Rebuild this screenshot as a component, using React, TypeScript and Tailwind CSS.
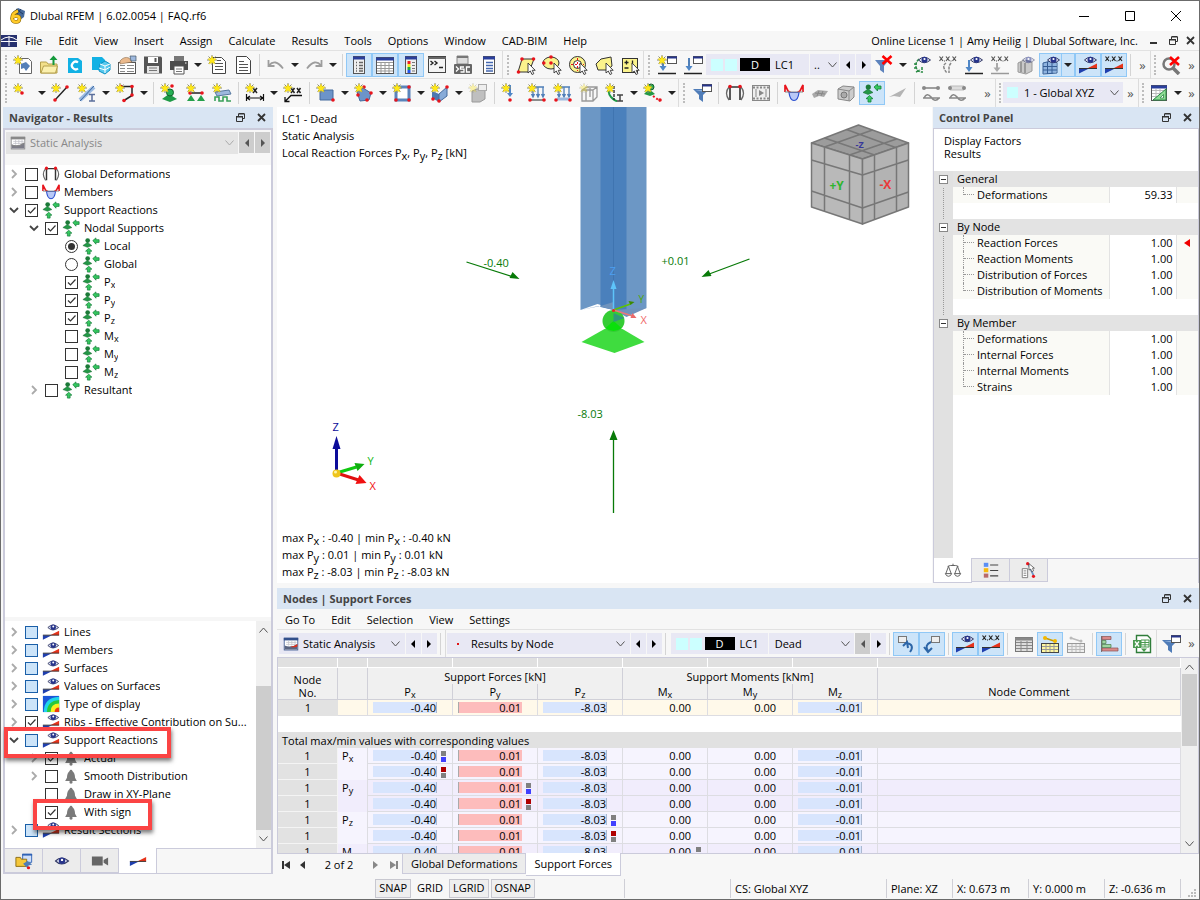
import React from 'react';
import { clsx } from 'clsx';

/* ---------- Icon pieces ---------- */

const Star = () => (
  <g>
    <path d="M5 0v10M0 5h10M1.5 1.5l7 7M8.5 1.5l-7 7" stroke="#8a8a70" />
    <path d="M5 1l1.2 2.6L9 3.8 7 6l.8 3L5 7.6 2.2 9 3 6 1 3.8l2.8-.2z" fill="#ffe81a" stroke="#e0c400" strokeWidth=".4" />
  </g>
);

const Eye = () => (
  <g>
    <path d="M6.500 5Q12 -.5 18.500 5 12 10.500 6.500 5z" fill="#dfe3f4" stroke="#333a66" />
    <circle cx="12.500" cy="4.800" r="3" fill="#27348b" />
    <circle cx="12.500" cy="4" r="1.100" fill="#fff" />
  </g>
);

const Wedge = () => (
  <g>
    <path d="M1 13.500h10L1 18.500z" fill="#1f3fae" />
    <path d="M9 13.500l10-5v5z" fill="#e6331a" />
    <path d="M1 13.500h18" stroke="#333" />
  </g>
);

const MiniWindow = () => (
  <g>
    <rect x="10.500" y="1.500" width="9" height="7" fill="#fff" stroke="#555" />
    <path d="M10 2.500h10" stroke="#27348b" strokeWidth="2" />
  </g>
);

const Cursor = () => (
  <path d="M12 8v10l2.300-2 1.700 3.500 1.800-.8-1.600-3.400h3z" fill="#fff" stroke="#333" strokeWidth=".9" />
);

const XXX = () => (
  <path d="M1.500 1.500l3.500 4.500M5 1.500L1.500 6M8 1.500L11.500 6M11.500 1.500L8 6M14.500 1.500L18 6M18 1.500L14.500 6M6 6h1M12.500 6h1" stroke="currentColor" strokeWidth="1.200" />
);

const Node = ({ x, y }: { x: number; y: number }) => <circle cx={x} cy={y} r="1.800" fill="#e8141c" />;

const icons: Record<string, React.ReactNode> = {
  newModel: <><path d="M6.500 3.500h9l3 3v12h-12z" fill="#fff" stroke="#666" /><path d="M8 9l5-2 4 4-4 5-2-3-3 1z" fill="#5580b8" /><Star /></>,
  open: <><path d="M1.500 7h6l1.500 2h9v9h-16.500z" fill="#f3e08a" stroke="#b5a04c" /><path d="M2 18l2.500-7h14l-2 7z" fill="#fbf0ae" stroke="#b5a04c" /><path d="M13.500 10V5h-3l4-4.500 4 4.500h-3v5z" fill="#149a3c" /></>,
  cloud: <><path d="M3 3h10l4 3v12H3z" fill="#12b1e4" /><path d="M13 7.500a3.800 3.800 0 1 0 0 6" fill="none" stroke="#fff" strokeWidth="2.200" /></>,
  cloudCube: <><path d="M1 2h10l3 3v10H1z" fill="#12b1e4" /><path d="M9 9l5-3 5 3v6l-5 4-6-3z" fill="#58c9ee" stroke="#0e92c4" /><path d="M9 9l5 2 5-2M14 11v7M8 13l6 2 5-3" fill="none" stroke="#fff" /></>,
  blocks: <><rect x="1.500" y="7.500" width="17" height="11" fill="#fff" stroke="#555" /><path d="M3 10.500h5M3 13.500h5M3 16.500h5M10 10.500h7M10 13.500h7M10 16.500h7" stroke="#888" /><path d="M3 6q4-5 9-3l3 4-6 1-6 1z" fill="#eab98c" stroke="#8a6a4a" strokeWidth=".6" /><path d="M13 1h6v5h-5z" fill="#9db8de" stroke="#456" strokeWidth=".7" /></>,
  save: <><path d="M1 1.500h17l1 1v16H1z" fill="#555" /><path d="M5 2h10v6H5z" fill="#fff" /><path d="M4 11h12v7H4z" fill="#e6e6e6" /><path d="M12.500 3v4" stroke="#555" strokeWidth="2" /><path d="M6 13h8M6 15.500h8" stroke="#777" /></>,
  print: <><path d="M5 1h10v5H5z" fill="#777" /><path d="M1 6h18v9H1z" fill="#4d4d4d" /><path d="M5 11h10v8H5z" fill="#fff" stroke="#555" /><path d="M7 14h6M7 16.500h6" stroke="#777" /><path d="M16 8h1.500" stroke="#fff" /></>,
  newReport: <><path d="M5.500 2.500h9l4 4v12h-13z" fill="#fff" stroke="#444" /><path d="M8 8.500h8M8 11.500h8M8 14.500h8M10 5.500h4" stroke="#555" strokeWidth="1.200" /><Star /></>,
  report: <><path d="M3.500 1.500h10l4 4v13h-14z" fill="#fff" stroke="#444" /><path d="M6 6.500h5M6 9.500h9M6 12.500h9M6 15.500h9" stroke="#555" strokeWidth="1.200" /></>,
  undo: <path d="M2.500 5v6h6M3 10.500Q9 3 17 13.500" fill="none" stroke="#9d9d9d" strokeWidth="1.800" />,
  redo: <path d="M17.500 5v6h-6M17 10.500Q11 3 3 13.500" fill="none" stroke="#9d9d9d" strokeWidth="1.800" />,
  navigator: <><rect x="4.500" y="1.500" width="11" height="17" fill="#efefef" stroke="#555" /><path d="M4 3h12" stroke="#2a3f9c" strokeWidth="3" /><path d="M7 7.500h1M7 10.500h1M7 13.500h1M7 16h1M10 7.500h4M10 10.500h4M10 13.500h4M10 16h4" stroke="#666" strokeWidth="1.500" /></>,
  tables: <><rect x="1.500" y="2.500" width="17" height="16" fill="#fff" stroke="#555" /><path d="M1 4h18" stroke="#2a3f9c" strokeWidth="3" /><path d="M2 7.500h16M2 10.500h16M2 13.500h16M2 16h16M6 7v11M10 7v11M14 7v11" stroke="#999" /></>,
  panel: <><rect x="4.500" y="1.500" width="11" height="17" fill="#efefef" stroke="#555" /><path d="M4 3h12" stroke="#2a3f9c" strokeWidth="3" /><path d="M8 6v3" stroke="#e22" strokeWidth="3" /><path d="M8 9v3" stroke="#ee2" strokeWidth="3" /><path d="M8 12v3" stroke="#2a4" strokeWidth="3" /><path d="M8 15v3" stroke="#25e" strokeWidth="3" /><path d="M11 7.500h3M11 10.500h3M11 13.500h3M11 16h3" stroke="#777" /></>,
  console: <><rect x="1.500" y="1.500" width="17" height="16" fill="#f4f4f4" stroke="#444" /><path d="M1 3h18" stroke="#666" strokeWidth="2" /><path d="M3.500 6l2.500 2-2.500 2M7.500 6l2.500 2-2.500 2M12 12.500h4" fill="none" stroke="#222" strokeWidth="1.400" /></>,
  script: <><path d="M4 1h11v8H4z" fill="#ddd" stroke="#888" /><path d="M4 2h11" stroke="#777" strokeWidth="2" /><rect x="1" y="9" width="18" height="10" rx="1" fill="#666" /><path d="M3 11.500l2.500 2.500L3 16.500M11 12H7.500v2.200H11V17H7.500M17 12h-3.500v5H17" fill="none" stroke="#fff" strokeWidth="1.300" /></>,
  sheet: <><rect x="4.500" y="1.500" width="11" height="17" fill="#fff" stroke="#555" /><path d="M4 3h12" stroke="#2a3f9c" strokeWidth="3" /><path d="M7 7.500h7M7 10.500h7M7 13.500h7M7 16h7" stroke="#4568b0" strokeWidth="1.500" /></>,
  selectBox: <><path d="M6 4h12l-5 13H2z" fill="#fbf38c" stroke="#333" /><Node x={6} y={4} /><Node x={17.500} y={4} /><Node x={2.500} y={17} /><Cursor /></>,
  selectEllipse: <><ellipse cx="9" cy="8" rx="8" ry="6" fill="#fbf38c" stroke="#333" /><Node x={1.800} y={8} /><Node x={9} y={8} /><Node x={9} y={2} /><Cursor /></>,
  selectRing: <><circle cx="9.500" cy="9.500" r="8" fill="#fbf38c" stroke="#333" /><circle cx="9.500" cy="9.500" r="4" fill="#fff" stroke="#333" /><path d="M9.500 3v13M3 9.500h13" stroke="#e8141c" strokeDasharray="2 2" /><Cursor /></>,
  selectPoly: <><path d="M2 9l5-5 10-2 1 9-5 4H4z" fill="#fbf38c" stroke="#333" /><Cursor /></>,
  selectPlus: <><rect x="2.500" y="3.500" width="15" height="14" fill="#fbf38c" stroke="#333" /><path d="M4.500 7.500h4M6.500 5.500v4M4.500 13h4M12.500 5.500v4" stroke="#222" strokeWidth="1.300" /><Cursor /></>,
  newLoad: <><path d="M6 5v7" stroke="#4f7fb8" strokeWidth="2" /><path d="M2.500 11l3.500 5 3.500-5z" fill="#4f86c6" /><path d="M1 18.500h18" stroke="#222" strokeWidth="1.500" /><MiniWindow /><Star /></>,
  load: <><path d="M6 3v9" stroke="#4f7fb8" strokeWidth="2" /><path d="M2.500 11l3.500 5 3.500-5z" fill="#4f86c6" /><path d="M1 18.500h18" stroke="#222" strokeWidth="1.500" /><MiniWindow /></>,
  filterX: <><path d="M1 5h14l-5 6v7l-4-3v-4z" fill="#5d83bd" /><path d="M8.500 1l9 8M17.500 1l-9 8" stroke="#f00" strokeWidth="2.600" /></>,
  springEye: <><path d="M7 4Q3 8 4 12t5 5M2 9h4M2 13h4M4 17l4-2M10 12v6" fill="none" stroke="#2a8a45" strokeWidth="1.500" strokeDasharray="3 1" /><Eye /></>,
  springX: <g color="#555"><XXX /><path d="M8 8q-3 2-2 5t3 5M13 8l-2 3v7" fill="none" stroke="#888" strokeWidth="1.500" strokeDasharray="3 1" /></g>,
  loadEye: <><path d="M5 5v9" stroke="#4f86c6" strokeWidth="2" /><path d="M1.500 12L5 17l3.500-5z" fill="#4f86c6" /><path d="M1 18.500h18" stroke="#222" strokeWidth="1.500" /><Eye /></>,
  loadX: <g color="#555"><XXX /><path d="M7 8v6" stroke="#aaa" strokeWidth="2" /><path d="M3.500 12.500L7 17l3.500-4.500z" fill="#aaa" /><path d="M1 18.500h18" stroke="#999" strokeWidth="1.500" /></g>,
  boxEye: <><path d="M2 8l6-3 8 2v9l-6 3-8-2z" fill="#c9c9c9" stroke="#999" /><path d="M5 7v10M9 8v10" stroke="#999" strokeWidth="2" /><g opacity=".5"><Eye /></g></>,
  gridEye: <><path d="M2 8l6-2 7 1v10l-6 2-7-1z" fill="#8fb4e0" /><path d="M2 8l6-1.500 8 1V18l-14 1zM2 11.500h14M2 15h14M6.500 7v12M11 7v12" fill="none" stroke="#345c93" /><Eye /></>,
  wedgeEye: <><Wedge /><Eye /></>,
  wedgeX: <g color="#222"><XXX /><Wedge /></g>,
  wedge: <g transform="translate(0 -3)"><Wedge /></g>,
  searchX: <><circle cx="8" cy="9" r="5.500" fill="none" stroke="#777" strokeWidth="2.500" /><path d="M12 13l6 6" stroke="#777" strokeWidth="3.500" /><path d="M9 2l9 8M18 2l-9 8" stroke="#f00" strokeWidth="2.600" /></>,
  nodeNew: <><Star /><Node x={9} y={10} /></>,
  lineNew: <><path d="M4 17L16 4" stroke="#222" strokeWidth="1.400" /><Node x={4} y={17} /><Node x={16} y={4} /><Star /></>,
  memberNew: <><path d="M3 17L17 4" stroke="#9bbae2" strokeWidth="4" /><path d="M3 18L17 3" stroke="#3e689e" /><path d="M12 11.500h6M12 18h6M15 11v7" stroke="#5b6f9c" strokeWidth="1.500" /><Star /></>,
  polyNew: <><path d="M6 3.500h11v9l-8 5" fill="none" stroke="#222" strokeWidth="1.500" /><Node x={6} y={3.500} /><Node x={17} y={3.500} /><Node x={17} y={12} /><Node x={9} y={17.500} /><Star /></>,
  supportNew: <><path d="M2 16l7-5 8 5-7 3z" fill="#1f9a46" /><circle cx="10" cy="9.500" r="3.500" fill="#25b053" stroke="#14632d" /><Node x={12} y={3} /><Star /></>,
  lineSupport: <><path d="M3 10h14" stroke="#222" strokeWidth="1.500" /><path d="M1 18l4-6 4 6zM11 18l4-6 4 6z" fill="#25a04b" /><Node x={4} y={10} /><Node x={16} y={10} /><Star /></>,
  surfSupport: <><path d="M3 9l14-2 2 4-14 2z" fill="#9db8de" stroke="#56789f" /><path d="M3 18v-4h4v4h4v-4h4v4h4" fill="none" stroke="#3aa05a" strokeWidth="1.600" /><Star /></>,
  dimX: <><path d="M1.500 11v7M18.500 11v7M2 15h16M5 13l-3 2 3 2M15 13l3 2-3 2" fill="none" stroke="#111" strokeWidth="1.200" /><path d="M8 5l4 5M12 5l-4 5" stroke="#222" strokeWidth="1.500" /><Star /></>,
  dimXX: <><path d="M19 12.500H8l-6 6M2 14v4.500h4.500" fill="none" stroke="#111" strokeWidth="1.300" /><path d="M8 5l3.500 5M11.500 5L8 10M14 5l3.500 5M17.500 5L14 10" stroke="#222" strokeWidth="1.500" /><Star /></>,
  surfaceNew: <><path d="M4 7h13v10H4z" fill="#6c94c9" stroke="#456b9d" /><Node x={17} y={17} /><Star /></>,
  solidNew: <><path d="M3 9l6-4 8 5-2 7-9 1z" fill="#6c94c9" stroke="#456b9d" /><Node x={10} y={4} /><Node x={17} y={10} /><Node x={4} y={12} /><Node x={13} y={17} /><Star /></>,
  openingNew: <><path d="M4 4h13v13H4z" fill="#fff" stroke="#5a84bb" strokeWidth="3" /><Node x={17} y={4} /><Node x={4} y={17} /><Node x={17} y={17} /><Star /></>,
  brickNew: <><path d="M2 8l7 3v8l-7-4z" fill="#4c78b0" /><path d="M9 11l8-7v9l-8 6z" fill="#87abd8" stroke="#456b9d" /><Node x={17} y={4} /><Node x={3} y={16} /><Node x={9} y={18} /><Star /></>,
  boxGray: <><path d="M4 8l5-2h8v10l-5 3H4z" fill="#bfbfbf" stroke="#999" /><rect x="10.500" y="1.500" width="8" height="6" fill="#eee" stroke="#aaa" /><g opacity=".35"><Star /></g></>,
  nodalLoad: <><path d="M9 2v10" stroke="#4f86c6" strokeWidth="2" /><path d="M6 10l3 4 3-4z" fill="#4f86c6" /><Node x={9} y={17} /><Star /></>,
  memberLoad: <><path d="M5 4h12M6 4v9M11 4v9M16 4v9M4.500 11L6 14l1.500-3M9.500 11l1.500 3 1.500-3M14.500 11l1.500 3 1.500-3" fill="none" stroke="#4f7fb8" strokeWidth="1.300" /><path d="M3 17h14" stroke="#222" /><Node x={3} y={17} /><Node x={17} y={17} /><Star /></>,
  surfaceLoad: <><path d="M5 4h12M6 4v9M11 4v9M16 4v9M4.500 11L6 14l1.500-3M9.500 11l1.500 3 1.500-3M14.500 11l1.500 3 1.500-3" fill="none" stroke="#4f7fb8" strokeWidth="1.300" /><path d="M4 14.500h13v3H4z" fill="#9db8de" /><Node x={3} y={17} /><Node x={17} y={17} /><Star /></>,
  solidLoad: <><path d="M3 7l5-3h10v10l-4 4H3zM3 7h11v11M14 7l4-3M7 7v11M11 5v9" fill="none" stroke="#999" strokeWidth="1.300" /><g opacity=".35"><Star /></g></>,
  imperfection: <><path d="M5 3Q2 10 6 14t6 4" fill="none" stroke="#1f9a46" strokeWidth="2" /><path d="M9 3v14" stroke="#222" strokeWidth="1.300" strokeDasharray="3 1" /><path d="M12 12h6M12 18h6M15 12v6" stroke="#444" strokeWidth="1.500" /><Star /></>,
  resultNew: <><path d="M1 11l5-5 6 5-5 2z" fill="#239746" /><circle cx="8" cy="4" r="3" fill="#25b053" stroke="#14632d" /><path d="M10 13l7 5" stroke="#e8141c" strokeWidth="2" strokeDasharray="2 2" /><Node x={17} y={17} /><Star /></>,
  filterWin: <><path d="M1 6h16l-6 6v7l-4-3v-4z" fill="#4f7cb8" /><path d="M3 7h12l-2 2z" fill="#8fb0dc" /><MiniWindow /></>,
  deform: <><path d="M5 17V4h10v13" fill="none" stroke="#333" strokeWidth="1.600" /><path d="M4 17Q-1 10 4 4M16 17q5-7 0-13" fill="none" stroke="#666" strokeWidth="1.300" /><Node x={5} y={3.500} /><Node x={15} y={3.500} /></>,
  film: <><rect x="1.500" y="2.500" width="17" height="15" fill="#eee" stroke="#888" /><path d="M2 4.500h16M2 15.500h16" stroke="#888" strokeWidth="2" strokeDasharray="2 1.500" /><path d="M8 7l5 3-5 3z" fill="#888" /><path d="M5 6v8M15 6v8" stroke="#888" /></>,
  moment: <><path d="M1 9V2l3 6 3 2M19 9V2l-3 6-3 2" fill="none" stroke="#e8141c" strokeWidth="1.700" /><path d="M5 9.500h10q-1 8-5 8t-5-8z" fill="#b9c9f7" stroke="#2c50d0" strokeWidth="1.200" /><path d="M1 9h18" stroke="#888" /></>,
  surfRes: <><path d="M2 11l6-4 10 1-4 6-5-1-5 2z" fill="#aaa" /><path d="M5 10l10 1M9 8l-2 5M13 8l-2 5" stroke="#888" /></>,
  solidRes: <><path d="M2 6l5-3 11 1v10l-4 4L2 16z" fill="#ccc" stroke="#888" /><path d="M2 6l11 2v10M13 8l5-4" fill="none" stroke="#888" /><circle cx="8" cy="12" r="3" fill="#aaa" stroke="#777" /></>,
  reaction: <><path d="M1 9.500L6 6l5 3.500-5 2z" fill="#239746" stroke="#14632d" strokeWidth=".5" /><circle cx="6.300" cy="4" r="2.600" fill="#1c7a38" /><path d="M12 4l3.500-3v2H19v3h-3.500v2z" fill="#35c860" stroke="#15803a" strokeWidth=".8" /><path d="M7.500 12.500l3.500 3.200H9V19H6v-3.300H4z" fill="#35c860" stroke="#15803a" strokeWidth=".8" /></>,
  wing: <path d="M1 14L18 5l-6 9-6-1z" fill="#b4b4b4" />,
  beamA: <><path d="M3 5h14" stroke="#888" strokeWidth="1.600" /><circle cx="3" cy="5" r="2" fill="#888" /><circle cx="17" cy="5" r="2" fill="#888" /><path d="M2 15h17M3 15q3-6 7-1 4 6 8 1" fill="none" stroke="#888" strokeWidth="1.600" /></>,
  beamB: <><path d="M3 3h14v4H3z" fill="#ddd" stroke="#bbb" /><circle cx="3" cy="5" r="2" fill="#888" /><circle cx="17" cy="5" r="2" fill="#888" /><path d="M2 15h17M3 15q3-6 7-1 4 6 8 1" fill="none" stroke="#888" strokeWidth="1.600" /></>,
  planeTable: <><rect x="2.500" y="2.500" width="15" height="15" fill="#fff" stroke="#555" /><path d="M2 4h16" stroke="#2a3f9c" strokeWidth="3" /><path d="M3 7.500h14M3 10.500h14M3 13.500h14M7 6v11M11 6v11" stroke="#bbb" /><path d="M4 17L17 6v11z" fill="#8fdc95" stroke="#2a8a45" /><path d="M11 15l3.500-3.500V15z" fill="#fff" stroke="#2a8a45" strokeWidth=".8" /></>,
  analysis: <><rect x="1.500" y="2.500" width="17" height="15" fill="#fff" stroke="currentColor" /><path d="M1 4h18" stroke="currentColor" strokeWidth="3" /><path d="M4 8h13M4 10.500h13M7 6v6M11 6v6M15 6v6" stroke="#c4c4cc" /><path d="M2 12q8 3 16-2v7H2z" fill="#7d7d88" /><path d="M2 12.500q8 3 16-2.500" fill="none" stroke="currentColor" strokeWidth="1.500" /></>,
  analysisColor: <><rect x="1.500" y="2.500" width="17" height="15" fill="#fff" stroke="#33508c" /><path d="M1 4h18" stroke="#33508c" strokeWidth="3" /><path d="M4 8h13M4 10.500h13M7 6v6M11 6v6M15 6v6" stroke="#c4c4cc" /><path d="M2 12q8 3 16-2v7H2z" fill="#5a6480" /><path d="M9 13.500q5-.5 9-3.500v3q-4 2-9 .5z" fill="#e0301c" /></>,
  bell: <><path d="M10 3q1.500 0 1.500 1.500Q14.500 7 14.500 12l2 3.500h-13l2-3.500q0-5 3-7.500Q8.500 3 10 3z" fill="#7a7a7a" /><circle cx="10" cy="16.800" r="1.800" fill="#7a7a7a" /></>,
  rainbow: <><path d="M1 1h18v18H1z" fill="#1a55d8" /><path d="M2 19Q2 3 19 2v17z" fill="#1fd5e8" /><path d="M5.500 19Q5.500 6.500 19 5.500V19z" fill="#28c93c" /><path d="M9.500 19q0-9.500 9.500-9.500V19z" fill="#f8ef20" /><path d="M14 19q0-5 5-5v5z" fill="#ee3a10" /></>,
  tabData: <><path d="M8.500 2.500h10v9h-10z" fill="#cfe0fa" stroke="#2f62b5" /><path d="M8 3h11" stroke="#2f62b5" strokeWidth="2" /><path d="M1 6h5l1 2h6v8H1z" fill="#f5c73a" stroke="#8a6a10" /><path d="M9 13l5-3 5 4-4 1-1 3z" fill="#4f7cb8" /><Node x={15} y={17.500} /></>,
  tabEye: <g transform="translate(-5 4) scale(1.200)"><Eye /></g>,
  tabCamera: <path d="M1 5h12v10H1zM14 9l5-3v9l-5-3z" fill="#666" />,
  scales: <path d="M10 3v2M4 6l3-1h6l3 1M5 6l-3 8M5 6l3 8M15 6l-3 8M15 6l3 8M1.500 14h7q-1 3-3.500 3t-3.500-3zM11.500 14h7q-1 3-3.500 3t-3.500-3z" fill="none" stroke="#555" />,
  legend: <><path d="M2 2h5v4.500H2z" fill="#5b8ff5" /><path d="M2 8h5v4.500H2z" fill="#f7b90c" /><path d="M2 14h5v4.500H2z" fill="#b96a6a" /><path d="M9 4.500h9M9 10.500h9M9 16.500h9" stroke="#444" strokeWidth="1.200" /></>,
  probe: <><path d="M2.500 8.500h6v10h-6z" fill="#fff" stroke="#777" /><path d="M4 11h3M4 13.500h3M4 16h3" stroke="#777" /><path d="M9 3l6 13" stroke="#6e96c8" strokeWidth="2" /><Node x={8.500} y={3} /><Node x={15} y={17} /><path d="M10 3v7l2-1 1 3 2-1-1-3h2z" fill="#fff" stroke="#444" strokeWidth=".8" /></>,
  syncOut: <><rect x="2.500" y="2.500" width="8" height="6" fill="#eee" stroke="#777" /><path d="M7 12l4-4 1 6M11 9q8 2 3 9" fill="none" stroke="#2d66a8" strokeWidth="2" /></>,
  syncIn: <><rect x="9.500" y="2.500" width="8" height="6" fill="#eee" stroke="#777" /><path d="M9 8q-7 3-3 9M2 13l4 5 4-4" fill="none" stroke="#2d66a8" strokeWidth="2" /></>,
  grayTable: <><rect x="1.500" y="3.500" width="17" height="14" fill="#ddd" stroke="#777" /><path d="M1 5h18" stroke="#888" strokeWidth="3" /><path d="M2 8.500h16M2 11.500h16M2 14.500h16M7 7v10M13 7v10" stroke="#888" /></>,
  yellowTable: <><rect x="1.500" y="9.500" width="17" height="9" fill="#fdf6a0" stroke="#444" /><path d="M2 12.500h16M2 15.500h16M6 10v8M10 10v8M14 10v8" stroke="#999" /><path d="M5 4l9 3" stroke="#c89a00" strokeWidth="1.500" /><circle cx="5" cy="4" r="2" fill="#f5b800" /><circle cx="15" cy="7" r="2" fill="#f5b800" /></>,
  paleTable: <><rect x="1.500" y="9.500" width="17" height="9" fill="#eee" stroke="#999" /><path d="M2 12.500h16M2 15.500h16M6 10v8M10 10v8M14 10v8" stroke="#bbb" /><path d="M5 4l9 3" stroke="#bbb" strokeWidth="1.500" /><circle cx="5" cy="4" r="1.500" fill="#bbb" /><circle cx="15" cy="7" r="1.500" fill="#bbb" /></>,
  bars: <><path d="M2.500 2v16" stroke="#777" /><path d="M3 2.500h9v3H3zM3 14h16v3H3z" fill="#d98a8a" stroke="#8a5050" strokeWidth=".7" /><path d="M3 6.500h4v3H3zM3 10.500h9v3H3z" fill="#9fd6a0" stroke="#4a7a4a" strokeWidth=".7" /></>,
  excel: <><path d="M4.500 1.500h11l3 3v14h-14z" fill="#fff" stroke="#2f7d3a" strokeWidth="1.400" /><path d="M9 6h8v7H9zM9 8.500h8M9 10.800h8M13 6v7" fill="none" stroke="#4a9a50" /><path d="M1 6h8v8H1z" fill="#4a9a50" /><path d="M3 7.500l4 5M7 7.500l-4 5" stroke="#fff" strokeWidth="1.300" /><path d="M9 14.500h6l-3 3.500z" fill="#4a9a50" /></>,
};

const Icon: React.FC<{ name: string; className?: string }> = ({ name, className }) => (
  <svg viewBox="0 0 20 20" fill="none" className={clsx('shrink-0', className ?? 'w-5 h-5')} aria-hidden="true">
    {icons[name]}
  </svg>
);

/* ---------- Toolbar controls ---------- */

const ToolButton: React.FC<{ name: string; active?: boolean }> = ({ name, active }) => (
  <button
    aria-label={name}
    className={clsx(
      'flex h-6 w-[26px] shrink-0 items-center justify-center border',
      active ? 'border-[#90c8f6] bg-[#cce4f9]' : 'border-transparent'
    )}
  >
    <Icon name={name} />
  </button>
);

const Caret = () => (
  <button aria-label="More options" className="flex h-6 w-3 shrink-0 items-center justify-center">
    <svg viewBox="0 0 8 4" className="h-1 w-2"><path d="M0 0h8L4 4z" fill="#222" /></svg>
  </button>
);

const Divider = () => (
  <span className="flex h-[22px] w-[7px] shrink-0 justify-center"><span className="w-px bg-[#d4d4d4]" /></span>
);

const Grip: React.FC<{ variant?: 'first' | 'slim' }> = ({ variant }) => (
  <span
    className={clsx(
      'flex h-7 shrink-0 items-center justify-center',
      variant === 'first' ? 'w-[9px]' : 'border-l border-[#dcdcdc]',
      variant === 'slim' && 'w-2',
      !variant && 'w-[11px]'
    )}
  >
    <span className="h-5 border-l-2 border-dotted border-[#bdbdbd]" />
  </span>
);

const More = () => <button aria-label="More buttons" className="w-[15px] shrink-0 text-center text-[13px] leading-4 text-[#555]">»</button>;

const Arrow: React.FC<{ left?: boolean; gray?: boolean }> = ({ left, gray }) => (
  <button
    aria-label={left ? 'Previous' : 'Next'}
    className={clsx('ml-px flex h-[21px] w-[15px] shrink-0 items-center justify-center', gray ? 'bg-[#cdcdcd]' : 'bg-[#e8e8f4]')}
  >
    <svg viewBox="0 0 4 8" className="h-2 w-1">
      <path d={left ? 'M4 0v8L0 4z' : 'M0 0v8l4-4z'} fill={gray ? '#555' : '#000'} />
    </svg>
  </button>
);

const Chevron = ({ className }: { className?: string }) => (
  <svg viewBox="0 0 9 6" className={clsx('pointer-events-none h-1.5 w-[9px] shrink-0', className)} fill="none">
    <path d="M.5 .5l4 4.500 4-4.500" stroke="#555" />
  </svg>
);

const Select: React.FC<{ label: string; value: string; className?: string }> = ({ label, value, className }) => (
  <select aria-label={label} className={clsx('min-w-0 appearance-none bg-transparent outline-none', className)}>
    <option>{value}</option>
  </select>
);

const LoadSwatch = () => (
  <>
    <span className="ml-[5px] h-3 w-3 bg-[#ccffff]" />
    <span className="ml-0.5 h-3 w-3 bg-[#ccffff]" />
    <span className="ml-[3px] h-[13px] w-[30px] bg-black text-center text-[11px] leading-[13px] text-white">D</span>
  </>
);

/* '|' divider, '^' caret, ':' grip, '*' prefix marks a pressed button */
const Tools: React.FC<{ items: string }> = ({ items }) => (
  <>
    {items.split(' ').map((item, i) => {
      if (item === '|') return <Divider key={i} />;
      if (item === '^') return <Caret key={i} />;
      if (item === ':') return <Grip key={i} />;
      return <ToolButton key={i} name={item.replace('*', '')} active={item.startsWith('*')} />;
    })}
  </>
);

const WindowButtons: React.FC<{ tight?: boolean }> = ({ tight }) => (
  <>
    <button aria-label="Restore" className={tight ? 'mr-2' : 'mr-3'}>
      <svg viewBox="0 0 9 9" className="h-[9px] w-[9px]" fill="none" stroke="#333">
        <path d="M2.500 3V1h6v4.500H6.500M2.500 .5h6" /><path d="M.5 4h6v4.500h-6zM0 3.500h7" />
      </svg>
    </button>
    <button aria-label="Close">
      <svg viewBox="0 0 9 9" className="h-[9px] w-[9px]"><path d="M1 1l7 7M8 1L1 8" stroke="#333" strokeWidth="1.800" /></svg>
    </button>
  </>
);

const PanelTitle: React.FC<{ title: string }> = ({ title }) => (
  <div className="flex h-[21px] shrink-0 items-center bg-[#d9e5f3] pl-1.5 pr-[7px]">
    <h2 className="flex-1 font-bold text-[#444]">{title}</h2>
    <WindowButtons />
  </div>
);

const Sub: React.FC<{ text: string }> = ({ text }) => {
  const [base, sub] = text.split('_');
  return <>{base}{sub && <sub className="bottom-[-2px] text-[9px]">{sub}</sub>}</>;
};

/* ---------- Navigator ---------- */

interface TreeItem {
  label: string;
  level: number;
  icon: string;
  open?: boolean;
  leaf?: boolean;
  checked?: boolean;
  partial?: boolean;
  radio?: boolean;
  marked?: 'wide' | 'narrow';
}

const resultTree: TreeItem[] = [
  { label: 'Global Deformations', level: 0, icon: 'deform' },
  { label: 'Members', level: 0, icon: 'moment' },
  { label: 'Support Reactions', level: 0, icon: 'reaction', open: true, checked: true },
  { label: 'Nodal Supports', level: 1, icon: 'reaction', open: true, checked: true },
  { label: 'Local', level: 2, icon: 'reaction', leaf: true, radio: true, checked: true },
  { label: 'Global', level: 2, icon: 'reaction', leaf: true, radio: true },
  { label: 'P_x', level: 2, icon: 'reaction', leaf: true, checked: true },
  { label: 'P_y', level: 2, icon: 'reaction', leaf: true, checked: true },
  { label: 'P_z', level: 2, icon: 'reaction', leaf: true, checked: true },
  { label: 'M_x', level: 2, icon: 'reaction', leaf: true },
  { label: 'M_y', level: 2, icon: 'reaction', leaf: true },
  { label: 'M_z', level: 2, icon: 'reaction', leaf: true },
  { label: 'Resultant', level: 1, icon: 'reaction' },
];

const displayTree: TreeItem[] = [
  { label: 'Lines', level: 0, icon: 'wedgeEye', partial: true },
  { label: 'Members', level: 0, icon: 'wedgeEye', partial: true },
  { label: 'Surfaces', level: 0, icon: 'wedgeEye', partial: true },
  { label: 'Values on Surfaces', level: 0, icon: 'wedgeEye', partial: true },
  { label: 'Type of display', level: 0, icon: 'rainbow', partial: true },
  { label: 'Ribs - Effective Contribution on Su...', level: 0, icon: 'wedgeEye', checked: true },
  { label: 'Support Reactions', level: 0, icon: 'wedgeEye', partial: true, open: true, marked: 'wide' },
  { label: 'Actual', level: 1, icon: 'bell', checked: true },
  { label: 'Smooth Distribution', level: 1, icon: 'bell' },
  { label: 'Draw in XY-Plane', level: 1, icon: 'bell', leaf: true },
  { label: 'With sign', level: 1, icon: 'bell', leaf: true, checked: true, marked: 'narrow' },
  { label: 'Result Sections', level: 0, icon: 'wedgeEye', partial: true },
];

const indents = ['pl-0', 'pl-5', 'pl-10'];

const TreeRow: React.FC<{ item: TreeItem }> = ({ item }) => (
  <li className={clsx('relative flex h-[18px] items-center', indents[item.level])}>
    <span className="flex w-5 shrink-0 pl-1">
      {!item.leaf && (
        <svg viewBox="0 0 10 10" className="h-2.5 w-2.5" fill="none" strokeWidth="1.800">
          {item.open ? <path d="M1 3l4 4 4-4" stroke="#444" /> : <path d="M3 1l4 4-4 4" stroke="#aaa" />}
        </svg>
      )}
    </span>
    <label className="flex min-w-0 items-center">
      <span className="grid shrink-0">
        <input
          type={item.radio ? 'radio' : 'checkbox'}
          name={item.radio ? 'axes' : undefined}
          defaultChecked={item.checked}
          className={clsx(
            'peer h-[13px] w-[13px] appearance-none border [grid-area:1/1]',
            item.radio && 'rounded-full',
            item.partial ? 'border-[#1a5fa8] bg-[#cce4f9]' : 'border-[#333] bg-white'
          )}
        />
        <svg viewBox="0 0 13 13" fill="none" className="pointer-events-none hidden h-[13px] w-[13px] [grid-area:1/1] peer-checked:block">
          {item.radio ? <circle cx="6.500" cy="6.500" r="3.500" fill="#333" /> : <path d="M3 6.500l2.500 2.500 5-5.500" stroke="#333" strokeWidth="1.200" />}
        </svg>
      </span>
      <Icon name={item.icon} className="ml-1 h-[18px] w-[18px]" />
      <span className="ml-1 truncate leading-[18px]"><Sub text={item.label} /></span>
    </label>
    {item.marked && (
      <span
        className={clsx(
          'pointer-events-none absolute -top-1 z-10 h-[31px] border-4 border-[#fb4444] shadow-[1px_3px_4px_rgba(0,0,0,0.5)]',
          item.marked === 'wide' ? '-left-px w-[167px]' : 'left-7 w-[119px]'
        )}
      />
    )}
  </li>
);

const Navigator = () => (
  <aside className="mb-[3px] ml-0.5 flex w-[270px] shrink-0 flex-col">
    <PanelTitle title="Navigator - Results" />
    <div className="flex min-h-0 flex-1 flex-col border-2 border-b border-[#cbcbdb] bg-[#f7f7f7]">
      <div className="flex px-px pb-[11px] pt-0.5">
        <div className="flex h-[22px] min-w-0 flex-1 items-center bg-[#e4e4e4] pl-1 pr-1 text-[#888]">
          <Icon name="analysis" className="h-4 w-4" />
          <Select label="Analysis type" value="Static Analysis" className="ml-1 flex-1" />
          <Chevron className="opacity-40" />
        </div>
        <Arrow left gray />
        <Arrow gray />
      </div>
      <ul className="min-h-0 flex-1 overflow-hidden bg-white">
        {resultTree.map((item, i) => <TreeRow key={i} item={item} />)}
      </ul>
      <div className="flex shrink-0 border-t-4 border-[#f6f6f6] bg-white">
        <ul className="min-w-0 flex-1 pb-[9px] pt-0.5">
          {displayTree.map((item, i) => <TreeRow key={i} item={item} />)}
        </ul>
        <div className="flex w-[15px] shrink-0 flex-col items-center justify-between bg-[#f0f0f0] py-1.5">
          <Chevron className="rotate-180" />
          <span className="mt-auto mb-1.5 h-36 w-[15px] bg-[#cdcdcd]" />
          <Chevron />
        </div>
      </div>
      <div className="flex h-[25px] shrink-0 border-t border-[#cbcbdb]">
        {['tabData', 'tabEye', 'tabCamera', 'wedge'].map((name) => (
          <button
            key={name}
            aria-label={name}
            className={clsx('flex w-[38px] items-center justify-center border-r border-[#cbcbdb]', name === 'wedge' ? '-mt-px bg-white' : 'border-b bg-[#ececec]')}
          >
            <Icon name={name} className="h-[18px] w-[18px]" />
          </button>
        ))}
      </div>
    </div>
  </aside>
);

/* ---------- Model view ---------- */

const Low: React.FC<{ children: React.ReactNode }> = ({ children }) => <sub className="bottom-[-3px] text-[11px]">{children}</sub>;

const Cube = () => (
  <g stroke="#777" strokeWidth="1.500" strokeLinejoin="round">
    <path d="M858 125l50 18-46 16-51-16z" fill="#9c9c9c" />
    <path d="M811 143l51 16v65l-51-17z" fill="#b9b9b9" />
    <path d="M862 159l46-16v64l-46 17z" fill="#b3b3b3" />
    <path d="M824 138l50 17M896 139l-47 16M846 129.500l49 18M872 130l-48 17M811 160l51 15 46-15M811 191l51 17 46-16M824 147v64M849 155v65M874 155v65M896 147v64" fill="none" />
  </g>
);

const ModelView = () => (
  <main className="relative min-w-0 flex-1 overflow-hidden bg-white">
    <svg viewBox="277 107 654 476" className="absolute inset-0 h-full w-full" fontSize="11">
      {/* Column profile */}
      <path d="M580 107h66v201q-8 3-24 6l-9-5-16-5-17 6z" fill="#6c97c5" />
      <path d="M600 107h26v206l-13 5v-8l-13-3z" fill="#4a80bc" />
      <path d="M613 107v205" stroke="#3f74b0" />
      <path d="M580 310l20-4 13-4v8l33-2-20 9-13-7-15-4z" fill="#6f93bd" />
      {/* Nodal support */}
      <path d="M581 342l23-13h18l22 13-30 11z" fill="#3fdc3f" />
      <circle cx="613" cy="321" r="11" fill="#35cc35" />
      <path d="M613 321l8 7q-8 6-16 0z" fill="#0ae00a" />
      <path d="M613 313l11 5-11 4z" fill="#2e9a7c" />
      <path d="M613 310v-24" stroke="#5ec4fa" strokeWidth="1.500" />
      <path d="M610 289l3-9 3 9z" fill="#5ec4fa" />
      <path d="M613 310l17-6" stroke="#5fc400" strokeWidth="1.500" />
      <path d="M634 302l-6-1 2 4z" fill="#3c8a00" />
      <path d="M613 310l19 6" stroke="#e87878" strokeWidth="1.500" />
      <path d="M636 318l-6 0 2-5z" fill="#ea6a6a" />
      <circle cx="613" cy="310.500" r="1.500" fill="#e22" />
      <text x="609" y="275" fill="#4d9ff0">Z</text>
      <text x="638" y="303" fill="#4fa800" fontSize="10">Y</text>
      <text x="640" y="324" fill="#f06a6a">X</text>
      {/* Reaction arrows */}
      <g stroke="#087a08" fill="#087a08" strokeWidth="1.300">
        <path d="M466 262l47 15M749 259l-43 16M613 513v-78" />
        <path d="M519 279l-10-1 3-6zM701 277l10-1-3-6zM613 430l-4 10h8z" stroke="none" />
      </g>
      <g fill="#087a08" fontSize="11">
        <text x="483" y="267">-0.40</text>
        <text x="661" y="265">+0.01</text>
        <text x="577" y="418">-8.03</text>
      </g>
      {/* Global axes */}
      <path d="M336 473v-27" stroke="#0c0c9a" strokeWidth="3" />
      <path d="M332 449l4-13 4 13z" fill="#0c0c9a" />
      <path d="M336 473l20-6" stroke="#10c810" strokeWidth="3" />
      <path d="M364 464l-10-1 3 8z" fill="#0fae0f" />
      <path d="M336 473l22 7" stroke="#e01010" strokeWidth="3" />
      <path d="M366 483l-11 1 4-9z" fill="#f01010" />
      <circle cx="336" cy="473.500" r="4" fill="#eec51c" />
      <circle cx="335" cy="472" r="1.500" fill="#fff6a8" />
      <text x="332" y="431" fill="#0c0c9a">Z</text>
      <text x="367" y="465" fill="#10b810">Y</text>
      <text x="369" y="490" fill="#f01010">X</text>
      <Cube />
      <g fontWeight="700" fontSize="12">
        <text x="829" y="190" fill="#2fb52f">+Y</text>
        <text x="879" y="189" fill="#ea3a3a">-X</text>
        <text x="855" y="148" fill="#38389a" fontSize="9">-Z</text>
      </g>
    </svg>
    <div className="relative flex h-full flex-col justify-between px-[5px] py-[3px] leading-[17px]">
      <div>
        <p>LC1 - Dead</p>
        <p>Static Analysis</p>
        <p>Local Reaction Forces P<Low>x</Low>, P<Low>y</Low>, P<Low>z</Low> [kN]</p>
      </div>
      <div>
        <p>max P<Low>x</Low> : -0.40 | min P<Low>x</Low> : -0.40 kN</p>
        <p>max P<Low>y</Low> : 0.01 | min P<Low>y</Low> : 0.01 kN</p>
        <p>max P<Low>z</Low> : -8.03 | min P<Low>z</Low> : -8.03 kN</p>
      </div>
    </div>
  </main>
);

/* ---------- Control panel ---------- */

const factorGroups = [
  { title: 'General', rows: [['Deformations', '59.33']] },
  { title: 'By Node', rows: [['Reaction Forces', '1.00'], ['Reaction Moments', '1.00'], ['Distribution of Forces', '1.00'], ['Distribution of Moments', '1.00']] },
  { title: 'By Member', rows: [['Deformations', '1.00'], ['Internal Forces', '1.00'], ['Internal Moments', '1.00'], ['Strains', '1.00']] },
];

const CollapseBox: React.FC<{ label: string }> = ({ label }) => (
  <button aria-label={`Collapse ${label}`} className="my-1 flex h-[9px] w-[9px] shrink-0 items-center justify-center border border-[#888] bg-white">
    <span className="h-px w-[5px] bg-[#333]" />
  </button>
);

const ControlPanel = () => (
  <aside className="ml-px flex w-[266px] shrink-0 flex-col">
    <PanelTitle title="Control Panel" />
    <div className="flex min-h-0 flex-1 flex-col border border-b-0 border-[#cbcbdb] bg-white">
      <div className="px-2.5 pb-[11px] pt-[5px] leading-[13px]">
        <p>Display Factors</p>
        <p>Results</p>
      </div>
      <div className="flex min-h-0 flex-1">
        <div className="flex w-[19px] shrink-0 flex-col items-center bg-[#e1e1e1]">
          <CollapseBox label="General" />
          <span className="h-[31px] border-l border-dotted border-[#999]" />
          <CollapseBox label="By Node" />
          <span className="h-[79px] border-l border-dotted border-[#999]" />
          <CollapseBox label="By Member" />
        </div>
        <table className="w-full table-fixed self-start border-collapse leading-4">
          <colgroup><col /><col className="w-[67px]" /><col className="w-[22px]" /></colgroup>
          {factorGroups.map((group) => (
            <tbody key={group.title}>
              <tr className="h-4 bg-[#e3e3e3]"><th colSpan={3} className="h-4 p-0 pl-1 text-left font-normal">{group.title}</th></tr>
              {group.rows.map(([name, value], i) => (
                <tr key={name} className="h-4">
                  <td className="bg-[#fafaf6] p-0">
                    <span className="flex h-4 pl-2.5">
                      <span className={clsx('border-l border-dotted border-[#999]', i === group.rows.length - 1 ? 'h-2' : 'h-4')} />
                      <span className="mr-[3px] h-2 w-2.5 border-b border-dotted border-[#999]" />
                      <span className="whitespace-nowrap">{name}</span>
                    </span>
                  </td>
                  <td className="border-x border-[#e3e3e3] p-0 pr-[3px] text-right">{value}</td>
                  <td className="bg-[#fafaf6] p-0">
                    {name === 'Reaction Forces' && <svg viewBox="0 0 6 8" className="ml-[7px] h-2 w-1.5"><path d="M6 0v8L0 4z" fill="#f00000" /></svg>}
                  </td>
                </tr>
              ))}
              <tr className="h-4"><td colSpan={3} className="h-4 p-0" /></tr>
            </tbody>
          ))}
        </table>
      </div>
      <div className="flex h-[25px] shrink-0 border-t border-[#cbcbdb] bg-[#f7f7f7]">
        {['scales', 'legend', 'probe'].map((name) => (
          <button
            key={name}
            aria-label={name}
            className={clsx('flex w-[38px] items-center justify-center border-b border-r border-[#cbcbdb]', name === 'scales' ? '-mt-px bg-white' : 'mb-px bg-[#ececec]')}
          >
            <Icon name={name} className="h-[18px] w-[18px]" />
          </button>
        ))}
      </div>
    </div>
  </aside>
);

/* ---------- Result table ---------- */

const values = ['-0.40', '0.01', '-8.03', '0.00', '0.00', '-0.01'];
const columns = ['P_x', 'P_y', 'P_z', 'M_x', 'M_y', 'M_z'];
const rowLabels = ['P_x', '', 'P_y', '', 'P_z', '', 'M_x'];

const ValueCell: React.FC<{ value: string; mark?: 'max' | 'min' }> = ({ value, mark }) => (
  <td className="relative border-b border-r border-[#dddde2] p-0 pl-[5px] pr-[15px] text-right">
    <span
      className={clsx(
        'block h-[11px] border-r leading-[11px]',
        value === '0.01' && 'border-l border-l-[#aaa] border-r-[#fdbcbc] bg-[#fdbcbc]',
        value !== '0.01' && value.startsWith('-') && 'border-r-[#aab8d0] bg-[#d8e5fd]',
        value === '0.00' && 'border-r-transparent'
      )}
    >
      {value}
    </span>
    {mark && (
      <span className="absolute right-1.5 top-[3px] flex flex-col gap-px">
        <span className={clsx('h-[5px] w-[5px]', mark === 'max' ? 'bg-[#808080]' : 'bg-[#b00000]')} />
        <span className={clsx('h-[5px] w-[5px]', mark === 'max' ? 'bg-[#4040ff]' : 'bg-[#808080]')} />
      </span>
    )}
  </td>
);

const ResultTable = () => (
  <table className="w-full table-fixed border-separate border-spacing-0 self-start leading-[15px]">
    <colgroup>
      <col className="w-[60px]" />
      <col className="w-[30px]" />
      {columns.map((c) => <col key={c} className="w-[85px]" />)}
      <col />
    </colgroup>
    <thead className="bg-[#f0f0f0] text-center">
      <tr className="h-2.5 bg-[#e0e0e0]">
        {Array.from({ length: 9 }, (_, i) => <td key={i} className="h-2.5 border-b border-r border-white p-0" />)}
      </tr>
      <tr className="h-4">
        <th rowSpan={2} className="border-b border-r border-[#d0d0d8] p-0 pt-1 font-normal leading-[13px]">Node<br />No.</th>
        <th rowSpan={2} className="border-b border-r border-[#d0d0d8] p-0" />
        <th colSpan={3} className="border-r border-[#d0d0d8] p-0 font-normal">Support Forces [kN]</th>
        <th colSpan={3} className="border-r border-[#d0d0d8] p-0 font-normal">Support Moments [kNm]</th>
        <th className="border-r border-[#d0d0d8] p-0" />
      </tr>
      <tr className="h-4">
        {columns.map((c) => <th key={c} className="h-4 border-b border-r border-[#d0d0d8] p-0 font-normal leading-[14px]"><Sub text={c} /></th>)}
        <th className="border-b border-r border-[#d0d0d8] p-0 font-normal">Node Comment</th>
      </tr>
    </thead>
    <tbody>
      <tr className="h-4 bg-[#fff9ea]">
        <td className="h-4 border-b border-[#e2e2e2] bg-[#e2e2e2] p-0 text-center">1</td>
        <td className="border-b border-r border-[#dddde2] p-0" />
        {values.map((v, i) => <ValueCell key={i} value={v} />)}
        <td className="border-b border-r border-[#dddde2] p-0" />
      </tr>
      <tr className="h-4"><td colSpan={9} className="h-4 p-0" /></tr>
      <tr className="h-4 bg-[#e1e1e1]"><td colSpan={9} className="h-4 p-0 pl-1">Total max/min values with corresponding values</td></tr>
      {rowLabels.map((label, row) => (
        <tr key={row} className={clsx('h-4', row % 4 < 2 ? 'bg-[#f6f4fe]' : 'bg-[#f1edfc]')}>
          <td className="h-4 border-b border-r border-[#f4f4f4] bg-[#e2e2e2] p-0 text-center">1</td>
          <td className="border-r border-[#dddde2] p-0 pl-1 leading-[14px]"><Sub text={label} /></td>
          {values.map((v, i) => (
            <ValueCell key={i} value={v} mark={Math.floor(row / 2) === i ? (row % 2 ? 'min' : 'max') : undefined} />
          ))}
          <td className="border-b border-r border-[#dddde2] p-0" />
        </tr>
      ))}
    </tbody>
  </table>
);

const TablePanel = () => (
  <section className="mb-px mt-[5px] flex h-[288px] shrink-0 flex-col">
    <PanelTitle title="Nodes | Support Forces" />
    <nav className="flex h-[21px] shrink-0 items-center gap-4 border-b border-[#e2e2e2] px-2 pt-0.5">
      {['Go To', 'Edit', 'Selection', 'View', 'Settings'].map((m) => <button key={m}>{m}</button>)}
    </nav>
    <div className="flex h-[27px] shrink-0 items-center pl-0.5">
      <div className="flex h-[21px] w-[127px] items-center bg-[#e8e8f4] pl-1 pr-[5px]">
        <Icon name="analysisColor" className="h-4 w-4" />
        <Select label="Analysis type" value="Static Analysis" className="ml-1 flex-1" />
        <Chevron />
      </div>
      <Arrow left /><Arrow />
      <Divider />
      <span className="mx-px h-7 w-px bg-[#dcdcdc]" />
      <div className="flex h-[21px] w-[184px] items-center bg-[#e8e8f4] pl-2.5 pr-[5px]">
        <span className="h-0.5 w-0.5 bg-[#e01515]" />
        <Select label="Results by" value="Results by Node" className="ml-3 flex-1" />
        <Chevron />
      </div>
      <Arrow left /><Arrow />
      <Divider />
      <div className="ml-0.5 flex h-[21px] w-[98px] items-center bg-[#e8e8f4]">
        <LoadSwatch />
        <span className="ml-[5px]">LC1</span>
      </div>
      <div className="ml-px flex h-[21px] w-[86px] items-center bg-[#e8e8f4] pl-1.5 pr-1">
        <Select label="Load case" value="Dead" className="flex-1" />
        <Chevron />
      </div>
      <Arrow left gray /><Arrow />
      <Tools items="| *syncOut *syncIn | *wedgeEye *wedgeX | grayTable *yellowTable paleTable | *bars | excel" />
      <span className="mx-px h-7 w-px bg-[#dcdcdc]" />
      <Tools items="filterWin" />
      <span className="ml-auto"><More /></span>
    </div>
    <div className="flex min-h-0 flex-1 overflow-hidden border border-[#cbcbdb] bg-white">
      <div className="min-h-0 min-w-0 flex-1 overflow-hidden"><ResultTable /></div>
      <div className="flex w-[17px] shrink-0 flex-col items-center bg-[#f0f0f0] py-1.5">
        <Chevron className="rotate-180" />
        <span className="mt-1 h-[72px] w-[15px] bg-[#cdcdcd]" />
        <Chevron className="mt-auto" />
      </div>
    </div>
    <div className="flex h-[22px] shrink-0 items-center">
      <span className="flex w-[125px] items-center pl-[5px]">
        <button aria-label="First table"><svg viewBox="0 0 8 8" className="h-2 w-2"><path d="M0 0h2v8H0zM8 0v8L2 4z" fill="#333" /></svg></button>
        <button aria-label="Previous table" className="ml-2.5"><svg viewBox="0 0 5 8" className="h-2 w-[5px]"><path d="M5 0v8L0 4z" fill="#333" /></svg></button>
        <span className="flex-1 text-center">2 of 2</span>
        <button aria-label="Next table" className="mr-3"><svg viewBox="0 0 5 8" className="h-2 w-[5px]"><path d="M0 0v8l5-4z" fill="#888" /></svg></button>
        <button aria-label="Last table" className="mr-1"><svg viewBox="0 0 8 8" className="h-2 w-2"><path d="M6 0h2v8H6zM0 0v8l6-4z" fill="#888" /></svg></button>
      </span>
      <button className="h-5 self-start border border-t-0 border-[#cbcbdb] bg-[#ececec] px-2">Global Deformations</button>
      <button className="-mt-px h-[23px] self-start border border-l-0 border-t-0 border-[#cbcbdb] bg-white px-2">Support Forces</button>
    </div>
  </section>
);

/* ---------- Window ---------- */

const menus = ['File', 'Edit', 'View', 'Insert', 'Assign', 'Calculate', 'Results', 'Tools', 'Options', 'Window', 'CAD-BIM', 'Help'];

const App: React.FC = () => (
  <div className="flex h-screen min-h-[640px] flex-col overflow-hidden border border-[#6b6b6b] bg-[#f7f7f7] font-['Open_Sans',sans-serif] text-[11px] leading-4 text-black">
    {/* Title bar */}
    <header className="flex h-[30px] shrink-0 items-center bg-white pl-2 pr-[18px]">
      <svg viewBox="0 0 16 16" className="h-4 w-4">
        <path d="M4 4l5-4 7 3-1 6-4 3z" fill="#466a9b" /><path d="M7 1l7 5M12 1L8 6" stroke="#223b62" />
        <path d="M9 3Q3 5 3 10.500 3.500 14 7 14t3.500-3.200Q10.500 8 7.200 8 5 8 4 9.500" fill="none" stroke="#8a6500" strokeWidth="3.600" />
        <path d="M9 3Q3 5 3 10.500 3.500 14 7 14t3.500-3.200Q10.500 8 7.200 8 5 8 4 9.500" fill="none" stroke="#ffca28" strokeWidth="2.400" />
      </svg>
      <h1 className="ml-[5px] flex-1">Dlubal RFEM | 6.02.0054 | FAQ.rf6</h1>
      <div className="flex items-center gap-9">
        <button aria-label="Minimize"><svg viewBox="0 0 10 10" className="h-2.5 w-2.5"><path d="M0 5.500h10" stroke="#000" /></svg></button>
        <button aria-label="Maximize"><svg viewBox="0 0 10 10" className="h-2.5 w-2.5"><path d="M.5 .5h9v9h-9z" fill="none" stroke="#000" /></svg></button>
        <button aria-label="Close"><svg viewBox="0 0 10 10" className="h-2.5 w-2.5"><path d="M0 0l10 10M10 0L0 10" stroke="#000" /></svg></button>
      </div>
    </header>

    {/* Menu bar */}
    <nav className="flex h-5 shrink-0 items-center border-b border-[#e2e2e2] pr-1">
      <svg viewBox="0 0 16 12" className="mr-2 h-3 w-4"><path d="M0 0h16v12H0z" fill="#27316f" /><path d="M0 6.500h16M8 1v10M0 5Q8-1 16 5" fill="none" stroke="#fff" /></svg>
      <div className="flex flex-1 gap-4">
        {menus.map((m) => <button key={m}>{m}</button>)}
      </div>
      <span className="mr-3">Online License 1 | Amy Heilig | Dlubal Software, Inc.</span>
      <button aria-label="Minimize document" className="mr-3 mt-1 h-0.5 w-[7px] bg-[#333]" />
      <WindowButtons tight />
    </nav>

    {/* Toolbars */}
    <div className="flex h-7 shrink-0 items-center border-b border-[#e2e2e2]">
      <Grip variant="first" />
      <Tools items="newModel open cloud cloudCube blocks save print ^ newReport report | undo ^ redo ^ | *navigator *tables *panel console script sheet : selectBox selectEllipse selectRing selectPoly selectPlus : newLoad load" />
      <div className="flex h-[21px] w-[103px] items-center bg-[#e8e8f4]">
        <LoadSwatch />
        <span className="ml-[5px]">LC1</span>
      </div>
      <div className="ml-px flex h-[21px] w-[29px] items-center bg-[#e8e8f4] pl-1 pr-0.5">
        <Select label="Load case" value=".." className="flex-1" />
        <Chevron />
      </div>
      <Arrow left /><Arrow />
      <Tools items="filterX ^ springEye springX loadEye loadX boxEye" />
      <span className="flex border border-[#90c8f6] bg-[#cce4f9]">
        <button aria-label="gridEye" className="flex h-[22px] w-[22px] items-center justify-center border-r border-[#90c8f6]"><Icon name="gridEye" /></button>
        <span className="-my-px"><Caret /></span>
      </span>
      <Tools items="*wedgeEye *wedgeX |" />
      <span className="ml-auto flex items-center"><More /><Grip variant="slim" /><ToolButton name="searchX" /><More /></span>
    </div>
    <div className="flex h-[27px] shrink-0 items-center">
      <Grip variant="first" />
      <Tools items="nodeNew ^ lineNew memberNew ^ polyNew ^ | supportNew lineSupport surfSupport | dimX ^ dimXX | surfaceNew ^ solidNew ^ openingNew ^ brickNew ^ boxGray | nodalLoad memberLoad surfaceLoad solidLoad imperfection ^ resultNew ^ : filterWin | deform film | moment surfRes solidRes *reaction wing | beamA beamB" />
      <span className="ml-auto flex items-center">
        <More />
        <Grip variant="slim" />
        <div className="flex h-[21px] w-[120px] items-center bg-[#e8e8f4] pl-1 pr-1">
          <span className="h-[11px] w-[11px] bg-[#ccffff]" />
          <Select label="Coordinate system" value="1 - Global XYZ" className="ml-1.5 flex-1" />
          <Chevron />
        </div>
        <More />
        <Grip variant="slim" />
        <ToolButton name="planeTable" />
        <Caret />
        <More />
      </span>
    </div>

    {/* Work area */}
    <div className="flex min-h-0 flex-1 pt-px">
      <Navigator />
      <div className="ml-1 flex min-w-0 flex-1 flex-col">
        <div className="flex min-h-0 flex-1">
          <ModelView />
          <ControlPanel />
        </div>
        <TablePanel />
      </div>
    </div>

    {/* Status bar */}
    <footer className="flex h-[22px] shrink-0 items-center">
      <div className="flex flex-1 justify-end gap-0.5 pr-[89px]">
        {['SNAP', 'GRID', 'LGRID', 'OSNAP'].map((s) => (
          <button key={s} className={clsx('h-[19px] border px-[3px]', s === 'GRID' ? 'border-transparent' : 'border-[#c8c8d0] bg-[#efefef]')}>{s}</button>
        ))}
      </div>
      <span className="h-[19px] w-[106px] border-l border-[#cfcfd6]" />
      <span className="h-[19px] w-[156px] border-l border-[#cfcfd6] pl-1 leading-[19px]">CS: Global XYZ</span>
      <span className="h-[19px] w-[66px] border-l border-[#cfcfd6] pl-1 leading-[19px]">Plane: XZ</span>
      <span className="h-[19px] w-[76px] border-l border-[#cfcfd6] pl-1 leading-[19px]">X: 0.673 m</span>
      <span className="h-[19px] w-[76px] border-l border-[#cfcfd6] pl-1 leading-[19px]">Y: 0.000 m</span>
      <span className="h-[19px] w-[76px] border-l border-[#cfcfd6] pl-1 leading-[19px]">Z: -0.636 m</span>
      <span className="flex h-[19px] w-[19px] items-end justify-end border-l border-[#cfcfd6] pr-0.5">
        <svg viewBox="0 0 9 9" className="h-[9px] w-[9px]"><path d="M6 0h2v2H6zM6 3h2v2H6zM6 6h2v2H6zM3 3h2v2H3zM3 6h2v2H3zM0 6h2v2H0z" fill="#bbb" /></svg>
      </span>
    </footer>
  </div>
);

export default App;
